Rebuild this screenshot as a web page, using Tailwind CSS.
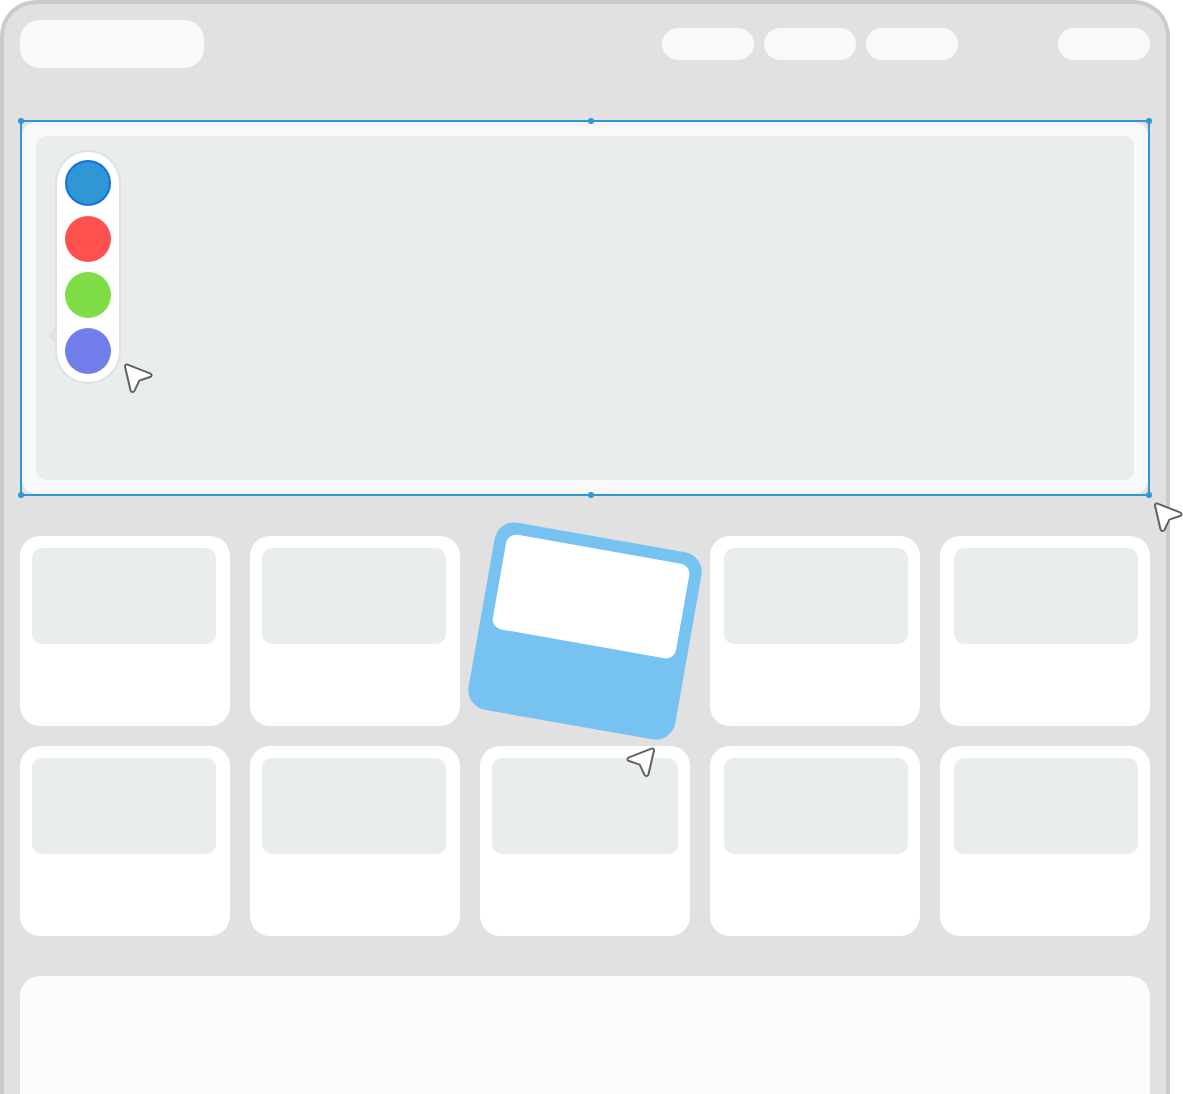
<!DOCTYPE html>
<html lang="en">
<head>
    <meta charset="UTF-8">
    <meta name="viewport" content="width=device-width, initial-scale=1.0">
    <title>Page Editor</title>
    <script src="https://cdn.jsdelivr.net/npm/@tailwindcss/browser@4"></script>
</head>
<body class="bg-white font-['Inter',sans-serif]">
    <!-- Cursor shape, reused by every pointer -->
    <svg class="hidden">
        <symbol id="cursor" viewBox="0 0 32 32">
            <path d="M5.6 2.6 L28 11.4 C30.2 12.3 30.1 14.4 28 15 L17.3 18.6 L12.6 28.6 C11.6 30.6 9 30.4 8.5 28.2 L3.1 5 C2.6 3.2 3.9 2 5.6 2.6 Z" fill="#fff" stroke="#606060" stroke-width="2" stroke-linejoin="round"/>
        </symbol>
    </svg>

    <div class="mr-[13px] min-h-screen flex flex-col rounded-t-[36px] border-4 border-b-0 border-[#cacaca] bg-[#e1e1e1] px-4 pt-4">
        <!-- Header -->
        <header class="flex justify-between items-center">
            <a href="#" aria-label="Home" class="block w-46 h-12 rounded-[20px] bg-[#f9f9f9]"></a>
            <nav class="flex items-center gap-[10px]">
                <a href="#" aria-label="Link one" class="w-23 h-8 rounded-full bg-[#f9f9f9]"></a>
                <a href="#" aria-label="Link two" class="w-23 h-8 rounded-full bg-[#f9f9f9]"></a>
                <a href="#" aria-label="Link three" class="w-23 h-8 rounded-full bg-[#f9f9f9]"></a>
                <button type="button" aria-label="Account" class="w-23 h-8 ml-[90px] rounded-full bg-[#f9f9f9]"></button>
            </nav>
        </header>

        <!-- Selected block -->
        <section class="relative mt-[52px] border-2 border-[#3097d5]">
            <div class="rounded-[14px] bg-[#f9f9f9] p-[14px]">
                <div class="h-[344px] rounded-[10px] bg-[#e9eded] pt-[14px] pl-[19px]">
                    <!-- Color picker -->
                    <div class="relative w-[66px]">
                        <svg class="absolute -left-[7px] top-[176px] w-2 h-[18px]" viewBox="0 0 8 18"><path d="M8 0 L1 7.6 Q0 9 1 10.4 L8 18 Z" fill="#e0e1e6"/></svg>
                        <div class="relative flex flex-col items-center gap-[10px] rounded-full border-2 border-[#e0e1e6] bg-white py-2">
                            <input type="radio" name="color" aria-label="Blue" checked class="appearance-none size-[46px] rounded-full border-2 border-[#1a6fe0] bg-[#3097d5]">
                            <input type="radio" name="color" aria-label="Red" class="appearance-none size-[46px] rounded-full bg-[#ff5050]">
                            <input type="radio" name="color" aria-label="Green" class="appearance-none size-[46px] rounded-full bg-[#7fdd46]">
                            <input type="radio" name="color" aria-label="Purple" class="appearance-none size-[46px] rounded-full bg-[#717de9]">
                        </div>
                        <svg class="absolute left-[67px] top-[212px] size-8"><use href="#cursor"/></svg>
                    </div>
                </div>
            </div>
            <!-- Handles -->
            <span class="absolute -left-1 -top-1 size-[6px] rounded-full bg-[#3097d5]"></span>
            <span class="absolute left-1/2 ml-[3px] -top-1 size-[6px] rounded-full bg-[#3097d5]"></span>
            <span class="absolute -right-1 -top-1 size-[6px] rounded-full bg-[#3097d5]"></span>
            <span class="absolute -left-1 -bottom-1 size-[6px] rounded-full bg-[#3097d5]"></span>
            <span class="absolute left-1/2 ml-[3px] -bottom-1 size-[6px] rounded-full bg-[#3097d5]"></span>
            <span class="absolute -right-1 -bottom-1 size-[6px] rounded-full bg-[#3097d5]"></span>
            <svg class="absolute -right-9 -bottom-[39px] size-8"><use href="#cursor"/></svg>
        </section>

        <!-- Cards -->
        <section class="mt-10 grid grid-cols-5 gap-5">
            <div class="h-[190px] rounded-[20px] bg-white pt-3 pl-3 pr-[14px]">
                <div class="h-24 rounded-[10px] bg-[#e9eded]"></div>
            </div>
            <div class="h-[190px] rounded-[20px] bg-white pt-3 pl-3 pr-[14px]">
                <div class="h-24 rounded-[10px] bg-[#e9eded]"></div>
            </div>
            <div class="h-[190px] rounded-[20px] bg-[#76c3f2] pt-3 px-3 rotate-10">
                <div class="h-24 rounded-[10px] bg-white"></div>
            </div>
            <div class="h-[190px] rounded-[20px] bg-white pt-3 pl-[14px] pr-3">
                <div class="h-24 rounded-[10px] bg-[#e9eded]"></div>
            </div>
            <div class="h-[190px] rounded-[20px] bg-white pt-3 pl-[14px] pr-3">
                <div class="h-24 rounded-[10px] bg-[#e9eded]"></div>
            </div>
            <div class="h-[190px] rounded-[20px] bg-white pt-3 pl-3 pr-[14px]">
                <div class="h-24 rounded-[10px] bg-[#e9eded]"></div>
            </div>
            <div class="h-[190px] rounded-[20px] bg-white pt-3 pl-3 pr-[14px]">
                <div class="h-24 rounded-[10px] bg-[#e9eded]"></div>
            </div>
            <div class="relative h-[190px] rounded-[20px] bg-white pt-3 px-3">
                <div class="h-24 rounded-[10px] bg-[#e9eded]"></div>
                <svg class="absolute right-[33px] top-0 size-8 -scale-x-100"><use href="#cursor"/></svg>
            </div>
            <div class="h-[190px] rounded-[20px] bg-white pt-3 pl-[14px] pr-3">
                <div class="h-24 rounded-[10px] bg-[#e9eded]"></div>
            </div>
            <div class="h-[190px] rounded-[20px] bg-white pt-3 pl-[14px] pr-3">
                <div class="h-24 rounded-[10px] bg-[#e9eded]"></div>
            </div>
        </section>

        <!-- Footer panel -->
        <section class="mt-10 flex-1 rounded-t-[20px] bg-[#fcfcfc]"></section>
    </div>
</body>
</html>
